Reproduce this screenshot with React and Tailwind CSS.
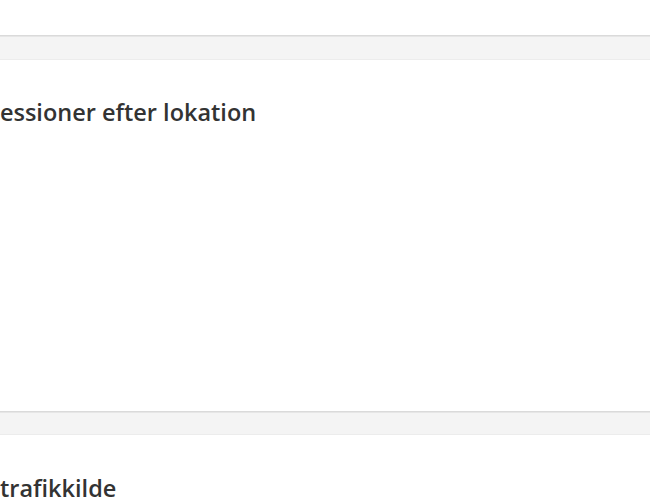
export default function App() {
  return (
    <div className="w-[650px] h-[500px] overflow-hidden bg-white font-['Open_Sans',sans-serif]">
      <div className="h-[35px] bg-white" />
      <div className="h-[25px] bg-[#f4f4f4] border-t border-[#dadada] border-b border-b-[#ececec] shadow-[inset_0_1px_0_#e6e6e6]" />
      <div className="h-[351px] bg-white pt-[36px]">
        <h2 className="ml-[-13px] text-[23.5px] font-semibold text-[#333] leading-[32px] whitespace-nowrap">Sessioner efter lokation</h2>
      </div>
      <div className="h-[24px] bg-[#f4f4f4] border-t border-[#dadada] border-b border-b-[#ececec] shadow-[inset_0_1px_0_#e6e6e6]" />
      <div className="bg-white pt-[37px]">
        <h2 className="ml-0 text-[23.5px] font-semibold text-[#333] leading-[32px] whitespace-nowrap">trafikkilde</h2>
      </div>
    </div>
  );
}
